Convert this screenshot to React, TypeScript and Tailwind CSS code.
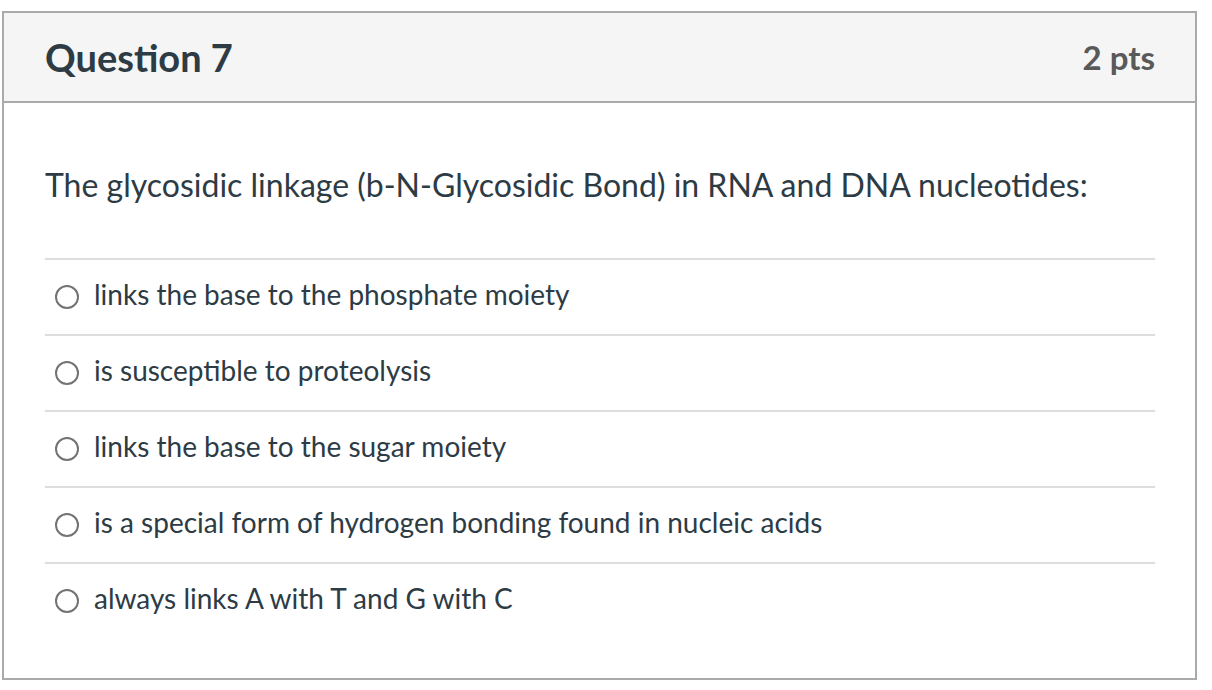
const options = [
  "links the base to the phosphate moiety",
  "is susceptible to proteolysis",
  "links the base to the sugar moiety",
  "is a special form of hydrogen bonding found in nucleic acids",
  "always links A with T and G with C",
];

export default function App() {
  return (
    <div className="min-h-screen bg-white pt-[11px] pl-[2px] font-['Lato',sans-serif] text-[#2d3b45]">
      <div className="w-[1195px] h-[669px] border-2 border-[#aaaaaa]">
        <div className="flex h-[90px] items-center justify-between border-b-2 border-[#aaaaaa] bg-[#f5f5f5] pl-[41px] pr-[40px]">
          <h2 className="text-[38px] font-bold leading-none">Question 7</h2>
          <span className="text-[33px] font-bold leading-none text-[#595959]">2 pts</span>
        </div>
        <div className="pl-[41px] pr-[40px] pt-[61px]">
          <p className="text-[32px] leading-[42px]">
            The glycosidic linkage (b-N-Glycosidic Bond) in RNA and DNA nucleotides:
          </p>
          <div className="mt-[52px]">
            {options.map((o) => (
              <label
                key={o}
                className="flex h-[76px] items-center gap-[15px] border-t-2 border-[#dddddd] pl-[10px]"
              >
                <span className="h-[24px] w-[24px] shrink-0 rounded-full border-2 border-[#737373] bg-white" />
                <span className="pb-[6px] text-[28px] leading-none">{o}</span>
              </label>
            ))}
          </div>
        </div>
      </div>
    </div>
  );
}
